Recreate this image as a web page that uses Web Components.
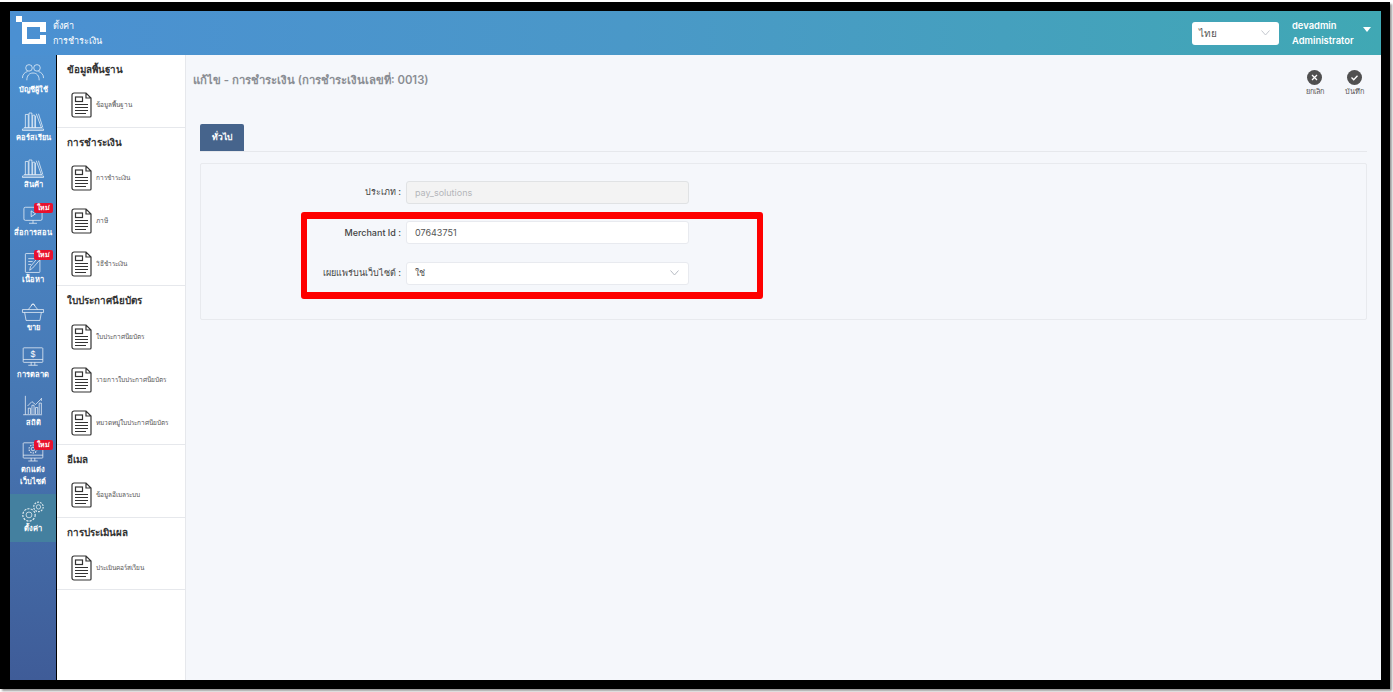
<!DOCTYPE html>
<html lang="th">
<head>
<meta charset="utf-8">
<title>ตั้งค่า การชำระเงิน</title>
<style>
  html, body { margin: 0; height: 100%; background: #fff; overflow: hidden; }
  body { font-family: Inter, "Noto Sans", "DejaVu Sans", sans-serif; }
</style>
</head>
<body>
<app-frame>
  <top-bar slot="top" title-one="ตั้งค่า" title-two="การชำระเงิน"></top-bar>
  <side-rail slot="rail">
    <rail-item icon="users" label="บัญชีผู้ใช้"></rail-item>
    <rail-item icon="books" label="คอร์สเรียน"></rail-item>
    <rail-item icon="books" label="สินค้า"></rail-item>
    <rail-item icon="video" label="สื่อการสอน" badge></rail-item>
    <rail-item icon="pen" label="เนื้อหา" badge></rail-item>
    <rail-item icon="basket" label="ขาย"></rail-item>
    <rail-item icon="dollar" label="การตลาด"></rail-item>
    <rail-item icon="chart" label="สถิติ"></rail-item>
    <rail-item icon="gear-screen" label="ตกแต่ง<br>เว็บไซต์" badge tall></rail-item>
    <rail-item icon="gears" label="ตั้งค่า" active></rail-item>
  </side-rail>
  <sub-menu slot="menu">
    <menu-group heading="ข้อมูลพื้นฐาน">
      <menu-link>ข้อมูลพื้นฐาน</menu-link>
    </menu-group>
    <menu-group heading="การชำระเงิน">
      <menu-link>การชำระเงิน</menu-link>
      <menu-link>ภาษี</menu-link>
      <menu-link>วิธีชำระเงิน</menu-link>
    </menu-group>
    <menu-group heading="ใบประกาศนียบัตร">
      <menu-link>ใบประกาศนียบัตร</menu-link>
      <menu-link>รายการใบประกาศนียบัตร</menu-link>
      <menu-link>หมวดหมู่ใบประกาศนียบัตร</menu-link>
    </menu-group>
    <menu-group heading="อีเมล">
      <menu-link>ข้อมูลอีเมลระบบ</menu-link>
    </menu-group>
    <menu-group heading="การประเมินผล">
      <menu-link>ประเมินคอร์สเรียน</menu-link>
    </menu-group>
  </sub-menu>
  <edit-page slot="main" heading="แก้ไข - การชำระเงิน (การชำระเงินเลขที่: 0013)">
    <form-row label="ประเภท" value="pay_solutions" disabled></form-row>
    <form-row label="Merchant Id" value="07643751"></form-row>
    <form-row label="เผยแพร่บนเว็บไซต์" value="ใช่" select></form-row>
  </edit-page>
</app-frame>

<script>
(function (customElements) {

    const ICONS = {
        users: '<circle cx="11" cy="8" r="4.500"/><circle cx="22" cy="8" r="4.500"/><path d="M2 22c0-5 3-8 7-9M31 22c0-5-3-8-7-9M8 25c0-6 3-10 8.500-10S25 19 25 25"/>',
        books: '<path d="M4 24h25M2 28h29M2 28v-2h29v2M6 24V6h4v18M11 24V4h4v20M16 24V7h3v17M21 5l7 19M20 24V8M24 5l6 19"/>',
        video: '<rect x="4" y="3" width="25" height="18" rx="2"/><path d="M14 8l6 4-6 4zM11 25h11M16.500 21v4"/>',
        pen: '<rect x="6" y="2" width="20" height="26" rx="1"/><path d="M10 9h9M10 13h6M10 17h4M30 6L16 22l-4 3 1-5L27 3z"/>',
        basket: '<path d="M2 13h29v4H2zM5 17l2 11h19l2-11M10 13l6.500-8 6.500 8M14 8a2.500 2.500 0 0 1 5 0"/>',
        dollar: '<rect x="3" y="1" width="27" height="20" rx="1"/><path d="M3 17h27M14 21v4M19 21v4M10 25h13"/><text x="16.500" y="14" text-anchor="middle" font-size="12" fill="#fff" stroke="none" font-family="Liberation Sans, sans-serif">$</text>',
        chart: '<path d="M6 1v26h23M3 27h3M10 26v-8h3v8M15 26V14h3v12M20 26v-9h3v9M25 26V11h3v15M9 15l6-6 5 4 8-8M28 4v4"/>',
        'gear-screen': '<rect x="3" y="1" width="27" height="21" rx="1"/><path d="M3 18h27M14 22v4M19 22v4M10 26h13"/><circle cx="16.500" cy="9.500" r="2.500"/><circle cx="16.500" cy="9.500" r="5.500" stroke-dasharray="2 1.500" stroke-width="1.500"/>',
        gears: '<circle cx="11" cy="19" r="4"/><circle cx="11" cy="19" r="8.500" stroke-dasharray="3 1.600" stroke-width="1.600"/><circle cx="24" cy="8" r="3"/><circle cx="24" cy="8" r="6.500" stroke-dasharray="2.500 1.500" stroke-width="1.600"/>'
    };

    class AppFrame extends HTMLElement {
        constructor() {
            super();
            this.attachShadow({ mode: 'open' });
            this.shadowRoot.innerHTML = `
      <style>
        :host { display: block; width: 1393px; height: 692px; box-sizing: border-box; padding: 2px 3px 3px 0; background: #fff; }
        .edge { height: 100%; box-sizing: border-box; padding: 9px 9px 9px 10px; background: #000; box-shadow: 2px 2px 2px #999; }
        .app { height: 100%; display: grid; grid-template-columns: 46px 130px 1fr; grid-template-rows: 44px 1fr; overflow: hidden; }
        ::slotted([slot=top]) { grid-column: 1 / -1; }
      </style>
      <div class="edge"><div class="app">
        <slot name="top"></slot>
        <slot name="rail"></slot>
        <slot name="menu"></slot>
        <slot name="main"></slot>
      </div></div>`;
        }
    }

    class TopBar extends HTMLElement {
        constructor() {
            super();
            this.attachShadow({ mode: 'open' });
        }
        connectedCallback() {
            this.shadowRoot.innerHTML = `
      <style>
        :host { display: flex; align-items: center; height: 44px; padding: 0 10px 0 5px; color: #fff; background: linear-gradient(90deg, #4b90d2 0%, #4a98c8 45%, #40a8b4 100%); font-family: Inter, "Noto Sans", sans-serif; }
        .logo { width: 31px; height: 31px; margin: -3px 7px 0 0; flex: none; }
        .titles { font-size: 9px; line-height: 15px; flex: 1; }
        .lang { width: 87px; height: 23px; box-sizing: border-box; margin-right: 13px; padding: 0 9px 0 7px; display: flex; align-items: center; justify-content: space-between; color: #555; font-size: 10px; background: #fff; border-radius: 3px; }
        .user { width: 62px; font-size: 9.400px; font-weight: 600; line-height: 15px; white-space: nowrap; }
        .caret { width: 0; height: 0; margin: -7px 0 0 9px; border: 4px solid transparent; border-top: 5px solid #fff; border-bottom: 0; }
      </style>
      <svg class="logo" viewBox="0 0 31 31" fill="#fff" aria-hidden="true">
        <rect x="1" y="0" width="6" height="6"/>
        <path d="M7 6h24v10h-6v-5H12v12h13v-4h6v9H7z"/>
      </svg>
      <div class="titles">${this.getAttribute('title-one')}<br>${this.getAttribute('title-two')}</div>
      <div class="lang"><span>ไทย</span><svg width="9" height="6" viewBox="0 0 9 6" fill="none" stroke="#c4c8cf"><path d="M.5.500l4 4.500 4-4.500"/></svg></div>
      <div class="user">devadmin<br>Administrator</div>
      <div class="caret"></div>`;
        }
    }

    class SideRail extends HTMLElement {
        constructor() {
            super();
            this.attachShadow({ mode: 'open' });
            this.shadowRoot.innerHTML = `
      <style>
        :host { display: block; padding-top: 5px; background: linear-gradient(180deg, #4c90d0 0%, #4778b4 55%, #3f5c98 100%); }
      </style>
      <slot></slot>`;
        }
    }

    class RailItem extends HTMLElement {
        constructor() {
            super();
            this.attachShadow({ mode: 'open' });
        }
        connectedCallback() {
            const active = this.hasAttribute('active');
            const tall = this.hasAttribute('tall');
            const badge = this.hasAttribute('badge') ? '<span class="badge">ใหม่</span>' : '';
            this.shadowRoot.innerHTML = `
      <style>
        :host { display: block; position: relative; height: ${tall ? 54 : active ? 48 : 47.5}px; box-sizing: border-box; padding-top: ${active ? 7 : 2}px; text-align: center; color: #fff; font-family: "Noto Sans", sans-serif; background: ${active ? '#44809f' : 'transparent'}; }
        svg { display: block; width: 24px; height: 22px; margin: 0 auto -1px; fill: none; stroke: rgba(255,255,255,.85); stroke-width: 1.100; }
        .label { font-size: 7.500px; font-weight: 600; line-height: 12px; white-space: nowrap; }
        .badge { position: absolute; top: 0; right: 3px; padding: 0 3px; background: #e8112d; border-radius: 2px; font-size: 7px; font-weight: 700; line-height: 10px; }
      </style>
      ${badge}
      <svg viewBox="0 0 33 30" aria-hidden="true">${ICONS[this.getAttribute('icon')]}</svg>
      <div class="label">${this.getAttribute('label')}</div>`;
        }
    }

    class SubMenu extends HTMLElement {
        constructor() {
            super();
            this.attachShadow({ mode: 'open' });
            this.shadowRoot.innerHTML = `
      <style>
        :host { display: block; box-sizing: border-box; margin-left: 1px; width: 129px; background: #fff; border-right: 1px solid #e6e8ec; }
      </style>
      <slot></slot>`;
        }
    }

    class MenuGroup extends HTMLElement {
        constructor() {
            super();
            this.attachShadow({ mode: 'open' });
        }
        connectedCallback() {
            this.shadowRoot.innerHTML = `
      <style>
        :host { display: block; border-bottom: 1px solid #e6e8ec; font-family: "Noto Sans", sans-serif; }
        h3 { margin: 0; padding: 8px 0 0 10px; height: 20.700px; font-size: 9.800px; font-weight: 700; line-height: 14px; color: #333; }
      </style>
      <h3>${this.getAttribute('heading')}</h3>
      <slot></slot>`;
        }
    }

    class MenuLink extends HTMLElement {
        constructor() {
            super();
            this.attachShadow({ mode: 'open' });
            this.shadowRoot.innerHTML = `
      <style>
        :host { display: flex; align-items: center; height: 43px; padding-left: 14px; color: #555; font-family: "Noto Sans", sans-serif; font-size: 6.500px; white-space: nowrap; }
        svg { width: 21px; height: 26px; margin-right: 4px; flex: none; fill: none; stroke: #333; stroke-width: 1.200; }
      </style>
      <svg viewBox="0 0 21 26" aria-hidden="true">
        <path d="M3 1h12l5 5v18a1 1 0 0 1-1 1H3a2 2 0 0 1-2-2V3a2 2 0 0 1 2-2zM15 1v5h5"/>
        <rect x="4.500" y="5" width="7" height="4.500"/>
        <path d="M4 12.500h13M4 15.500h13M4 18.500h13M4 21.500h11"/>
      </svg>
      <slot></slot>`;
        }
    }

    class EditPage extends HTMLElement {
        constructor() {
            super();
            this.attachShadow({ mode: 'open' });
        }
        connectedCallback() {
            this.shadowRoot.innerHTML = `
      <style>
        :host { display: block; position: relative; box-sizing: border-box; padding: 15px 14px 0 14px; background: #f5f7fb; font-family: Inter, "Noto Sans", sans-serif; }
        .head { display: flex; justify-content: space-between; height: 53px; }
        h1 { margin: 0 0 0 -7px; padding-top: 1px; font-size: 11.300px; font-weight: 600; line-height: 18px; color: #8a8d93; }
        .actions { display: flex; gap: 15px; margin-right: 0; }
        .action { width: 25px; text-align: center; font-size: 7.300px; line-height: 10px; color: #555; }
        .action svg { display: block; width: 15px; height: 15px; margin: 0 auto 2px; }
        .tabs { display: flex; align-items: flex-end; height: 28px; border-bottom: 1px solid #e6e8ec; }
        .tab { width: 44px; height: 27px; color: #fff; background: #46648c; border-radius: 2px 2px 0 0; text-align: center; font-size: 8.500px; font-weight: 600; line-height: 26px; }
        .panel { box-sizing: border-box; height: 157px; margin-top: 11px; padding: 8px 0 0; border: 1px solid #e8eaee; border-radius: 2px; }
        .mark { position: absolute; left: 115px; top: 157px; width: 462px; height: 87px; box-sizing: border-box; border: solid #fe0000; border-width: 7px 6.500px; border-radius: 3px; pointer-events: none; }
      </style>
      <div class="head">
        <h1>${this.getAttribute('heading')}</h1>
        <div class="actions">
          <div class="action">
            <svg viewBox="0 0 15 15"><circle cx="7.500" cy="7.500" r="7.500" fill="#505050"/><path d="M5 5l5 5M10 5l-5 5" stroke="#fff" stroke-width="1.300"/></svg>
            ยกเลิก
          </div>
          <div class="action">
            <svg viewBox="0 0 15 15"><circle cx="7.500" cy="7.500" r="7.500" fill="#505050"/><path d="M4.500 7.500l2.200 2.200 3.800-4" fill="none" stroke="#fff" stroke-width="1.300"/></svg>
            บันทึก
          </div>
        </div>
      </div>
      <div class="tabs"><span class="tab">ทั่วไป</span></div>
      <div class="panel"><slot></slot></div>
      <div class="mark"></div>`;
        }
    }

    class FormRow extends HTMLElement {
        constructor() {
            super();
            this.attachShadow({ mode: 'open' });
        }
        connectedCallback() {
            const off = this.hasAttribute('disabled');
            const arrow = this.hasAttribute('select')
                ? '<svg width="9" height="6" viewBox="0 0 9 6" fill="none" stroke="#b8bcc4"><path d="M.5.500l4 4.500 4-4.500"/></svg>'
                : '';
            this.shadowRoot.innerHTML = `
      <style>
        :host { display: flex; align-items: center; height: 40.500px; font-family: Inter, "Noto Sans", sans-serif; font-size: 9px; }
        label { width: 205px; padding-right: 5px; box-sizing: border-box; text-align: right; color: #444; font-weight: 500; white-space: nowrap; }
        .field { display: flex; align-items: center; justify-content: space-between; width: 283px; height: 23px; box-sizing: border-box; padding: 0 9px 0 8px; border: 1px solid ${off ? '#e0e2e4' : '#e8eaef'}; border-radius: 3px; background: ${off ? '#f3f3f3' : '#fff'}; color: ${off ? '#b4b6ba' : '#555'}; }
      </style>
      <label>${this.getAttribute('label')} :</label>
      <div class="field"><span>${this.getAttribute('value')}</span>${arrow}</div>`;
        }
    }

    customElements.define('app-frame', AppFrame);
    customElements.define('top-bar', TopBar);
    customElements.define('side-rail', SideRail);
    customElements.define('rail-item', RailItem);
    customElements.define('sub-menu', SubMenu);
    customElements.define('menu-group', MenuGroup);
    customElements.define('menu-link', MenuLink);
    customElements.define('edit-page', EditPage);
    customElements.define('form-row', FormRow);

})(window.customElements);
</script>
</body>
</html>
